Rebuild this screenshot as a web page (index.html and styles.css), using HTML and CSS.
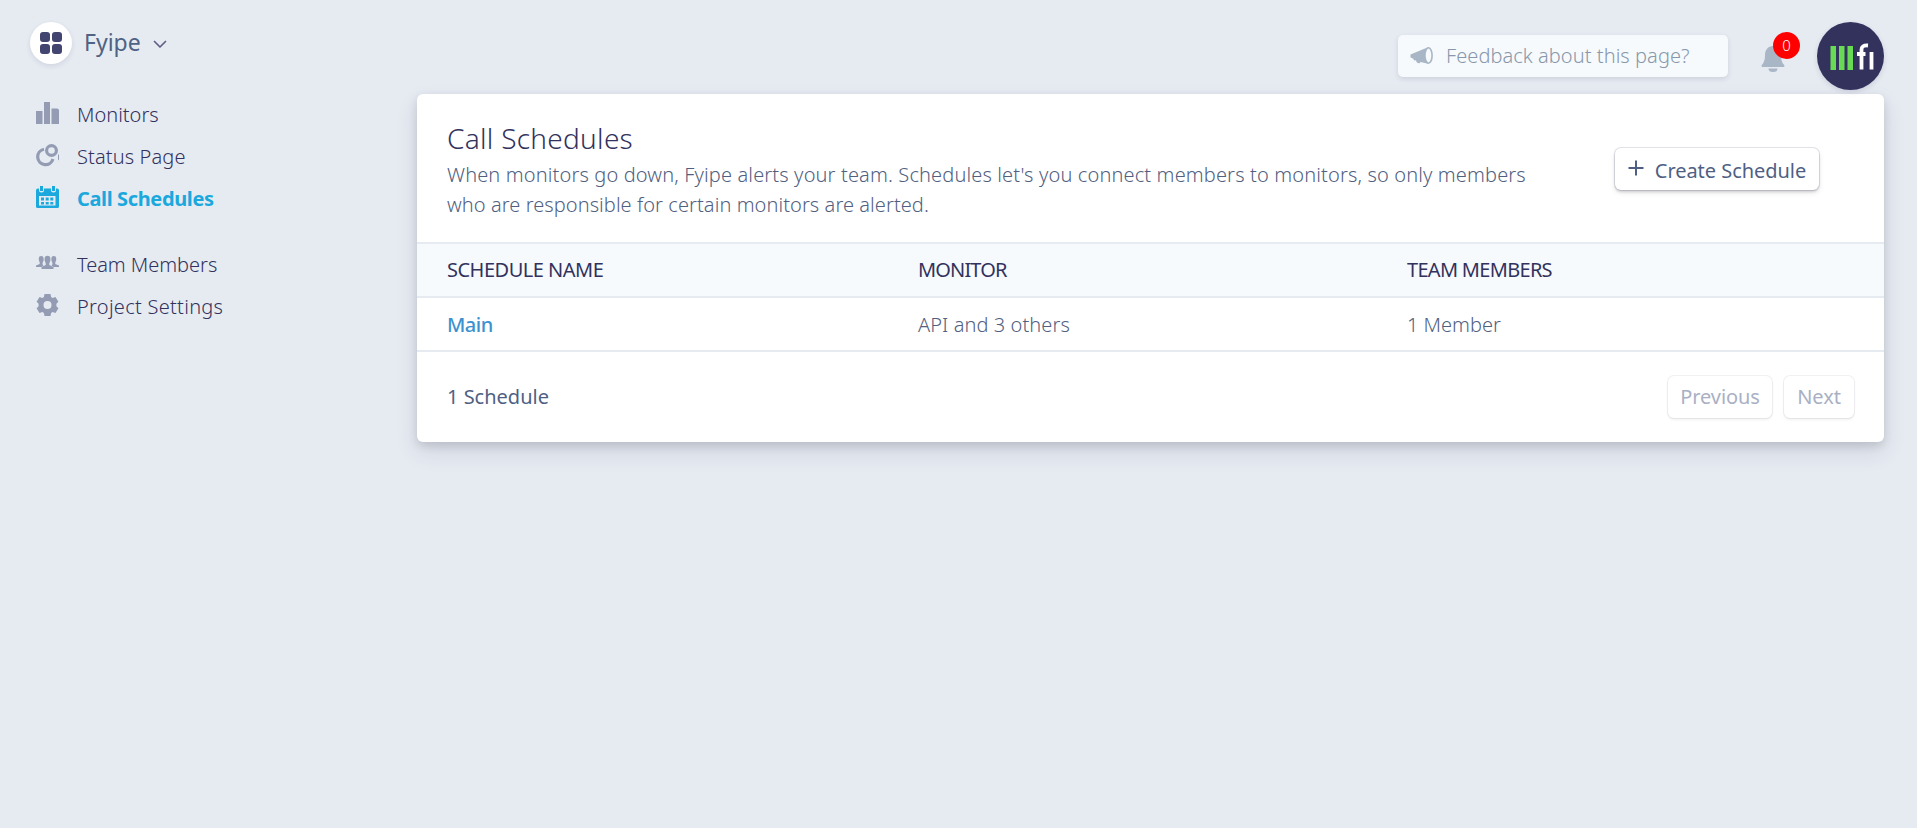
FILE: index.html
```html
<!DOCTYPE html>
<html lang="en">
<head>
<meta charset="utf-8">
<title>Fyipe</title>
<link rel="stylesheet" href="styles.css">
</head>
<body>
<div class="app">
  <aside class="side">
    <div class="project">
      <span class="project-icon"><i></i><i></i><i></i><i></i></span>
      <span class="project-name">Fyipe</span>
      <svg class="chevron" width="14" height="9" viewBox="0 0 14 9"><path d="M1.500 1.500 7 7l5.500-5.500" fill="none" stroke="#625e85" stroke-width="1.700" stroke-linecap="round" stroke-linejoin="round"/></svg>
    </div>
    <nav class="nav">
      <a class="item"><svg width="23" height="23" viewBox="0 0 23 23"><path d="M0 9h6.500v13H0zM8 0h6v22H8zM15.500 6.500H21a2 2 0 0 1 2 2V22h-7.500z"/></svg><span class="t-monitors">Monitors</span></a>
      <a class="item"><svg width="23" height="23" viewBox="0 0 23 23"><g fill="none" stroke="#939cb3" stroke-width="3.200"><path d="M8 5.200A7.800 7.800 0 1 0 17 15"/><circle cx="15.500" cy="6.500" r="4.900"/></g><path d="M22 10.500h1v6l-1-1z"/></svg><span class="t-status">Status Page</span></a>
      <a class="item active"><svg width="23" height="23" viewBox="0 0 23 23"><path fill-rule="evenodd" d="M0 4.500a2 2 0 0 1 2-2h1v1.500a2.500 2.500 0 0 0 5 0V2.500h7V4a2.500 2.500 0 0 0 5 0V2.500h1a2 2 0 0 1 2 2v16a1.500 1.500 0 0 1-1.500 1.500h-20A1.500 1.500 0 0 1 0 20.500zM3 10v9.500h16.500V10z"/><path d="M4 0h3v5H4zM16 0h3v5h-3zM5 11.500h3v3H5zM9.700 11.500h3v3h-3zM14.300 11.500h3v3h-3zM5 16h3v2.500H5zM9.700 16h3v2.500h-3zM14.300 16h3v2.500h-3z"/></svg><span class="t-call">Call Schedules</span></a>
      <a class="item gap"><svg width="23" height="23" viewBox="0 0 23 23"><path d="M2.800 8V6.300a2.400 2.400 0 0 1 4.800 0V8.500L6.600 11v1.500l1 .8L5.500 15H0v-1.500l3.700-1.600v-1.400zM20.200 8V6.300a2.400 2.400 0 0 0-4.800 0v2.200l1 2.500v1.500l-1 .8 2.100 1.700H23v-1.500l-3.700-1.600v-1.400z"/><path d="M8.600 8.500V6.700a2.900 2.900 0 0 1 5.800 0v1.800L13.300 11.500v1.600l4.200 2V17h-12v-1.900l4.200-2v-1.600z"/></svg><span class="t-team">Team Members</span></a>
      <a class="item"><svg width="23" height="23" viewBox="0 0 23 23"><path fill-rule="evenodd" d="M8.500 0h6l.6 3 1.500.9 2.900-1 2.900 4.800-2 2v2.600l2 2-2.900 4.800-2.900-1-1.500.9-.6 3h-6l-.6-3-1.500-.9-2.900 1L.600 14.300l2-2V9.700l-2-2 2.900-4.800 2.900 1L7.900 3zM11.500 7a4 4 0 1 0 0 8 4 4 0 0 0 0-8z"/></svg><span class="t-project">Project Settings</span></a>
    </nav>
  </aside>
  <main class="main">
    <header class="top">
      <div class="feedback">
        <svg width="23" height="18" viewBox="0 0 23 18"><path d="M.5 7.500 18 .3v16.400l-7.500-1.700c-.5 1.500-2 1.700-3.500.5L5.500 13l-1 .8L3 11.500.5 10.500z" fill="#a8b6c5"/><ellipse cx="18.500" cy="8.500" rx="3.600" ry="7.700" fill="#f7fafc" stroke="#a8b6c5" stroke-width="1.600"/></svg>
        <span class="t-feedback">Feedback about this page?</span>
      </div>
      <div class="bell">
        <svg width="24" height="28" viewBox="0 0 24 28"><path d="M12 1c-5 0-8 4-8 9 0 6-1.500 8-3.500 10.500C.5 21.500 1 22 2 22h20c1 0 1.500-.5 1.500-1.500C21.500 18 20 16 20 10c0-5-3-9-8-9zM7.500 23.500h9a4.500 3.500 0 0 1-9 0z" fill="#a8b6c5"/></svg>
        <span class="badge">0</span>
      </div>
      <div class="avatar">
        <svg width="68" height="68" viewBox="0 0 68 68"><path d="M13.500 24h5.500v24h-5.500zM22 24h5.500v24H22zM30.500 24H36v24h-5.500z" fill="#68da54"/><path d="M44.500 47.500V27.500q0-4.500 6.500-4M40 32h8.500M54.500 30v17.500" fill="none" stroke="#fff" stroke-width="3.800"/></svg>
      </div>
    </header>
    <section class="card">
      <div class="card-head">
        <div class="intro">
          <h1>Call Schedules</h1>
          <p><span class="t-line1">When monitors go down, Fyipe alerts your team. Schedules let's you connect members to monitors, so only members</span><br><span class="t-line2">who are responsible for certain monitors are alerted.</span></p>
        </div>
        <button class="btn create"><svg width="16" height="16" viewBox="0 0 16 16"><path d="M8 .5v15M.5 8h15" stroke="#4f5f84" stroke-width="2"/></svg><span>Create Schedule</span></button>
      </div>
      <div class="row thead"><span class="t-h1">SCHEDULE NAME</span><span class="t-h2">MONITOR</span><span class="t-h3">TEAM MEMBERS</span></div>
      <div class="row data"><span class="t-main">Main</span><span class="t-api">API and 3 others</span><span>1 Member</span></div>
      <footer class="foot">
        <span class="count">1 Schedule</span>
        <span class="pager"><button class="btn prev" disabled>Previous</button><button class="btn next" disabled>Next</button></span>
      </footer>
    </section>
  </main>
</div>
</body>
</html>
```
FILE: styles.css
```css
* { box-sizing: border-box; }
body { margin: 0; height: 828px; background: #e6ebf2; font: 300 20px/30px "Noto Sans", "Open Sans", sans-serif; color: #525f7f; white-space: nowrap; overflow: hidden; }
.app { display: flex; }
.side { width: 417px; padding: 22px 0 0 30px; }
.project { display: flex; align-items: center; height: 42px; }
.project-icon { width: 42px; height: 42px; border-radius: 50%; background: #fff; display: grid; grid-template-columns: 10px 10px; grid-auto-rows: 10px; gap: 2px; place-content: center; box-shadow: 0 2px 5px rgba(50,50,93,.12); }
.project-icon i { background: #42456f; border-radius: 3px; }
.project-name { margin: -2px 0 0 12px; width: 58px; font-size: 23px; font-weight: 450; color: #4f6384; }
.chevron { margin: 2px 0 0 11px; }
.nav { padding: 30px 0 0 6px; }
.item { display: flex; height: 42px; align-items: center; color: #32325d; }
.item svg { fill: #939cb3; margin: -3px 18px 0 0; }
.item.active { color: #1ba8dd; font-weight: 700; letter-spacing: -.37px; }
.item.active svg { fill: #1ba8dd; }
.item.gap { margin-top: 24px; }
.t-status { letter-spacing: .12px; }
.t-project { letter-spacing: .28px; }
.t-team { letter-spacing: -.04px; }
.main { width: 1467px; }
.top { height: 94px; padding-top: 22px; display: flex; justify-content: flex-end; }
.feedback { width: 330px; height: 42px; margin-top: 13px; padding-left: 12px; display: flex; align-items: center; background: #f6fafd; border-radius: 5px; color: #8898aa; letter-spacing: .06px; box-shadow: 0 2px 5px rgba(50,50,93,.14); }
.feedback svg { margin-right: 13px; }
.bell { position: relative; width: 24px; height: 28px; margin: 23px 32px 0 33px; }
.bell svg { display: block; }
.badge { position: absolute; left: 12px; top: -13px; width: 27px; height: 27px; border-radius: 50%; background: #f00; color: #fff; font-size: 15px; line-height: 27px; font-weight: 300; text-align: center; }
.avatar { width: 67px; height: 68px; border-radius: 50%; background: #32325d; box-shadow: 0 2px 5px rgba(50,50,93,.15); }
.card { height: 348px; border-radius: 6px; background: #fff; box-shadow: 0 10px 22px rgba(50,50,93,.12), 0 4px 10px rgba(0,0,0,.12); }
.card-head { height: 148px; padding: 29px 65px 0 30px; display: flex; justify-content: space-between; }
h1 { margin: 0; font-size: 28px; line-height: 30px; font-weight: 300; letter-spacing: .28px; color: #32325d; }
p { margin: 7px 0 0; line-height: 30px; }
.t-line1 { letter-spacing: .137px; }
.t-line2 { letter-spacing: .07px; }
.btn { height: 44px; padding: 0; border: 0; border-radius: 6px; background: #fff; color: #4f5f84; font: 450 20px/44px "Noto Sans", sans-serif; display: flex; justify-content: center; align-items: center; box-shadow: 0 0 0 1px rgba(50,50,93,.13), 0 2px 3px rgba(0,0,0,.17), 0 3px 6px rgba(50,50,93,.08); }
.create { width: 204px; height: 42px; margin-top: 25px; letter-spacing: -.04px; }
.create svg { margin: -3px 11px 0 0; }
.create span { margin-top: 3px; }
.row { display: grid; grid-template-columns: 471px 489px 1fr; align-items: center; height: 54px; padding-left: 30px; border-bottom: 2px solid #e6ebf1; }
.data { padding-top: 2px; }
.thead { height: 56px; border-top: 2px solid #e6ebf1; background: #f6fafd; color: #32325d; font-weight: 450; }
.t-h1 { letter-spacing: -.5px; }
.t-h2 { letter-spacing: -.85px; }
.t-h3 { letter-spacing: -.7px; }
.t-api { letter-spacing: .08px; }
.t-main { color: #3c92d0; font-weight: 500; letter-spacing: -.5px; }
.foot { height: 90px; padding: 0 30px; display: flex; align-items: center; justify-content: space-between; font-weight: 450; color: #4f5f84; }
.count { letter-spacing: 0; }
.pager { display: flex; gap: 12px; }
.pager .btn { height: 42px; color: #a9b0c4; letter-spacing: -.06px; box-shadow: 0 0 0 1px rgba(50,50,93,.07), 0 2px 3px rgba(0,0,0,.06); }
.prev { width: 104px; }
.next { width: 70px; }
```
